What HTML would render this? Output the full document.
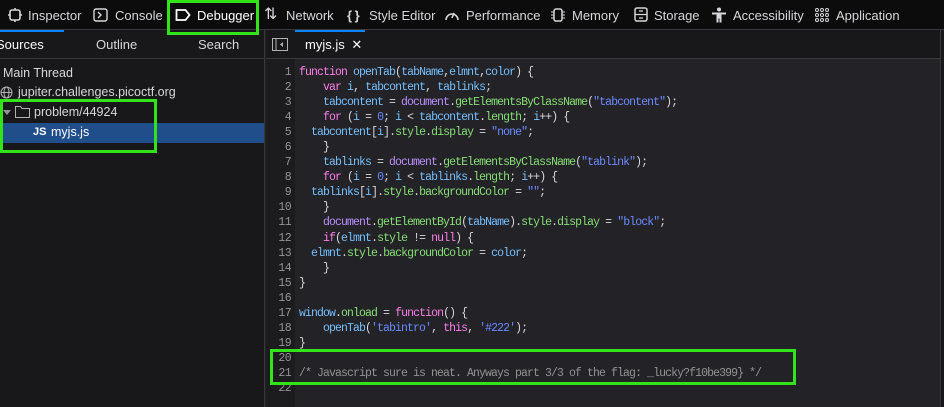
<!DOCTYPE html>
<html><head><meta charset="utf-8"><style>
*{margin:0;padding:0;box-sizing:border-box}
body{width:944px;height:407px;overflow:hidden;background:#232327;font-family:"Liberation Sans",sans-serif;position:relative;color:#d7d7db}
.tb{position:absolute;left:0;top:0;width:944px;height:30px;background:#0c0c0d;border-bottom:1px solid #38383d}
.ti{position:absolute;top:0;height:30px;line-height:31px;font-size:13px;color:#d7d7db}
.ti svg{position:absolute;top:8px}
.left{position:absolute;left:0;top:30px;width:265px;height:377px;background:#18181a;border-right:1px solid #38383d}
.hdr{position:absolute;top:30px;height:29px;border-bottom:1px solid #38383d;background:#18181a}
.gut{position:absolute;left:266px;top:59px;width:29px;height:348px;background:#1c1c1f}
.code{position:absolute;left:266px;top:65px;font-family:"Liberation Mono",monospace;font-size:11.5px;letter-spacing:-0.9px;line-height:15.05px;white-space:pre}
.ln{display:inline-block;width:25px;text-align:right;color:#939395;margin-right:8px;letter-spacing:-0.6px}
.k{color:#ff7de9}.d{color:#b98eff}.i{color:#75bfff}.p{color:#86de74}.s{color:#6b89ff}.c{color:#939395}
.g{position:absolute;border:3px solid #33e31a}
</style></head><body>
<div class="tb">
<div class="ti" style="left:8px"><svg width="14" height="14" viewBox="0 0 14 14" style="left:0"><rect x="2" y="2" width="10" height="10" rx="2" fill="none" stroke="#d7d7db" stroke-width="1.6"/><path d="M7 0v2M7 12v2M0 7h2M12 7h2" stroke="#d7d7db" stroke-width="1.6"/></svg><span style="margin-left:20px">Inspector</span></div>
<div class="ti" style="left:93px"><svg width="15" height="14" viewBox="0 0 15 14" style="left:0"><rect x="1" y="1" width="13" height="12" rx="2" fill="none" stroke="#d7d7db" stroke-width="1.4"/><path d="M5 4l3 3-3 3" fill="none" stroke="#d7d7db" stroke-width="1.4"/></svg><span style="margin-left:22px">Console</span></div>
<div class="ti" style="left:175px;color:#fff"><svg width="16" height="14" viewBox="0 0 16 14" style="left:0"><path d="M1.5 2h9l4 5-4 5h-9z" fill="none" stroke="#fff" stroke-width="1.8"/></svg><span style="margin-left:22px">Debugger</span></div>
<div class="ti" style="left:264px"><span style="font-size:16px;position:absolute;left:0;top:-1px">⇅</span><span style="margin-left:22px">Network</span></div>
<div class="ti" style="left:347px"><span style="font-weight:bold;position:absolute;left:0">{&thinsp;}</span><span style="margin-left:22px">Style Editor</span></div>
<div class="ti" style="left:444px"><svg width="16" height="14" viewBox="0 0 16 14" style="left:0"><path d="M2 12A6 6 0 1 1 14 12" fill="none" stroke="#d7d7db" stroke-width="1.6"/><path d="M8 10l2-5" stroke="#d7d7db" stroke-width="1.6"/></svg><span style="margin-left:22px">Performance</span></div>
<div class="ti" style="left:550px"><svg width="16" height="14" viewBox="0 0 16 14" style="left:0"><rect x="4" y="1" width="8" height="12" rx="2" fill="none" stroke="#d7d7db" stroke-width="1.5"/><path d="M1 4h3M1 7h3M1 10h3M12 4h3M12 7h3M12 10h3" stroke="#d7d7db"/></svg><span style="margin-left:22px">Memory</span></div>
<div class="ti" style="left:634px"><svg width="14" height="15" viewBox="0 0 14 15" style="left:0;top:7px"><rect x="1" y="1" width="12" height="13" rx="2" fill="none" stroke="#d7d7db" stroke-width="1.5"/><path d="M1 7.5h12M5 4h4M5 11h4" stroke="#d7d7db" stroke-width="1.3"/></svg><span style="margin-left:20px">Storage</span></div>
<div class="ti" style="left:711px"><svg width="16" height="16" viewBox="0 0 16 16" style="left:0;top:7px"><circle cx="8" cy="2.5" r="2" fill="#d7d7db"/><path d="M1 5.5h14v2h-4.5v8h-2v-4h-1v4h-2v-8H1z" fill="#d7d7db"/></svg><span style="margin-left:22px">Accessibility</span></div>
<div class="ti" style="left:815px"><svg width="14" height="14" viewBox="0 0 14 14" style="left:0"><g fill="none" stroke="#d7d7db" stroke-width="1"><circle cx="2" cy="2" r="1.5"/><circle cx="7" cy="2" r="1.5"/><circle cx="12" cy="2" r="1.5"/><circle cx="2" cy="7" r="1.5"/><circle cx="7" cy="7" r="1.5"/><circle cx="12" cy="7" r="1.5"/><circle cx="2" cy="12" r="1.5"/><circle cx="7" cy="12" r="1.5"/><circle cx="12" cy="12" r="1.5"/></g></svg><span style="margin-left:21px">Application</span></div>
</div>
<div class="left"></div>
<div class="hdr" style="left:0;width:265px;border-right:1px solid #38383d"></div>
<div style="position:absolute;left:0;top:30px;width:64px;height:2px;background:#0a84ff"></div>
<div style="position:absolute;left:-4px;top:37px;font-size:13px;color:#f9f9fa">Sources</div>
<div style="position:absolute;left:96px;top:37px;font-size:13px;color:#d7d7db">Outline</div>
<div style="position:absolute;left:198px;top:37px;font-size:13px;color:#d7d7db">Search</div>
<div class="hdr" style="left:266px;width:674px"></div>
<div style="position:absolute;left:295px;top:30px;width:70px;height:2px;background:#0a84ff"></div>
<svg style="position:absolute;left:272px;top:38px" width="16" height="13" viewBox="0 0 16 13"><rect x="0.5" y="0.5" width="15" height="12" fill="none" stroke="#b1b1b3"/><path d="M4 1v11" stroke="#b1b1b3"/><path d="M11 4v5l-3-2.5z" fill="#b1b1b3"/></svg>
<div style="position:absolute;left:305px;top:37px;font-size:13px;color:#f9f9fa">myjs.js <span style="margin-left:3px">✕</span></div>
<div style="position:absolute;left:940px;top:30px;width:4px;height:377px;background:#18181a;border-left:1px solid #38383d"></div>
<div style="position:absolute;left:3px;top:66px;font-size:12.5px;color:#d7d7db">Main Thread</div>
<svg style="position:absolute;left:0;top:86px" width="13" height="13" viewBox="0 0 13 13"><g fill="none" stroke="#b1b1b3"><circle cx="6.5" cy="6.5" r="5.5"/><ellipse cx="6.5" cy="6.5" rx="2.5" ry="5.5"/><path d="M1 6.5h11"/></g></svg>
<div style="position:absolute;left:18px;top:85px;font-size:12.5px;color:#d7d7db">jupiter.challenges.picoctf.org</div>
<div style="position:absolute;left:3px;top:110px;width:0;height:0;border-left:4px solid transparent;border-right:4px solid transparent;border-top:5px solid #939395"></div>
<svg style="position:absolute;left:15px;top:106px" width="15" height="12" viewBox="0 0 15 12"><path d="M0.5 0.5h5l1.5 2h7.5v9h-14z" fill="none" stroke="#b1b1b3"/></svg>
<div style="position:absolute;left:34px;top:105px;font-size:12.5px;color:#d7d7db">problem/44924</div>
<div style="position:absolute;left:0;top:123px;width:264px;height:20px;background:#204e8a"></div>
<div style="position:absolute;left:33px;top:126px;font-size:11px;font-weight:bold;color:#fff">JS</div>
<div style="position:absolute;left:51px;top:125px;font-size:12.5px;color:#fff">myjs.js</div>
<div class="gut"></div>
<div class="code"><span class="ln">1</span><span class="k">function</span> <span class="i">openTab</span>(<span class="i">tabName</span>,<span class="i">elmnt</span>,<span class="i">color</span>) {
<span class="ln">2</span>    <span class="k">var</span> <span class="i">i</span>, <span class="i">tabcontent</span>, <span class="i">tablinks</span>;
<span class="ln">3</span>    <span class="i">tabcontent</span> = <span class="d">document</span>.<span class="p">getElementsByClassName</span>(<span class="s">"tabcontent"</span>);
<span class="ln">4</span>    <span class="k">for</span> (<span class="i">i</span> = <span class="s">0</span>; <span class="i">i</span> &lt; <span class="i">tabcontent</span>.<span class="p">length</span>; <span class="i">i</span>++) {
<span class="ln">5</span>  <span class="i">tabcontent</span>[<span class="i">i</span>].<span class="p">style</span>.<span class="p">display</span> = <span class="s">"none"</span>;
<span class="ln">6</span>    }
<span class="ln">7</span>    <span class="i">tablinks</span> = <span class="d">document</span>.<span class="p">getElementsByClassName</span>(<span class="s">"tablink"</span>);
<span class="ln">8</span>    <span class="k">for</span> (<span class="i">i</span> = <span class="s">0</span>; <span class="i">i</span> &lt; <span class="i">tablinks</span>.<span class="p">length</span>; <span class="i">i</span>++) {
<span class="ln">9</span>  <span class="i">tablinks</span>[<span class="i">i</span>].<span class="p">style</span>.<span class="p">backgroundColor</span> = <span class="s">""</span>;
<span class="ln">10</span>    }
<span class="ln">11</span>    <span class="d">document</span>.<span class="p">getElementById</span>(<span class="i">tabName</span>).<span class="p">style</span>.<span class="p">display</span> = <span class="s">"block"</span>;
<span class="ln">12</span>    <span class="k">if</span>(<span class="i">elmnt</span>.<span class="p">style</span> != <span class="k">null</span>) {
<span class="ln">13</span>  <span class="i">elmnt</span>.<span class="p">style</span>.<span class="p">backgroundColor</span> = <span class="i">color</span>;
<span class="ln">14</span>    }
<span class="ln">15</span>}
<span class="ln">16</span>
<span class="ln">17</span><span class="i">window</span>.<span class="p">onload</span> = <span class="k">function</span>() {
<span class="ln">18</span>    <span class="i">openTab</span>(<span class="s">'tabintro'</span>, <span class="k">this</span>, <span class="s">'#222'</span>);
<span class="ln">19</span>}
<span class="ln">20</span>
<span class="ln">21</span><span class="c">/* Javascript sure is neat. Anyways part 3/3 of the flag: _lucky?f10be399} */</span>
<span class="ln">22</span>
</div>
<div class="g" style="left:167px;top:0;width:92px;height:35px"></div>
<div class="g" style="left:0;top:99px;width:157px;height:54px"></div>
<div class="g" style="left:270px;top:349px;width:526px;height:36px"></div>
</body></html>
